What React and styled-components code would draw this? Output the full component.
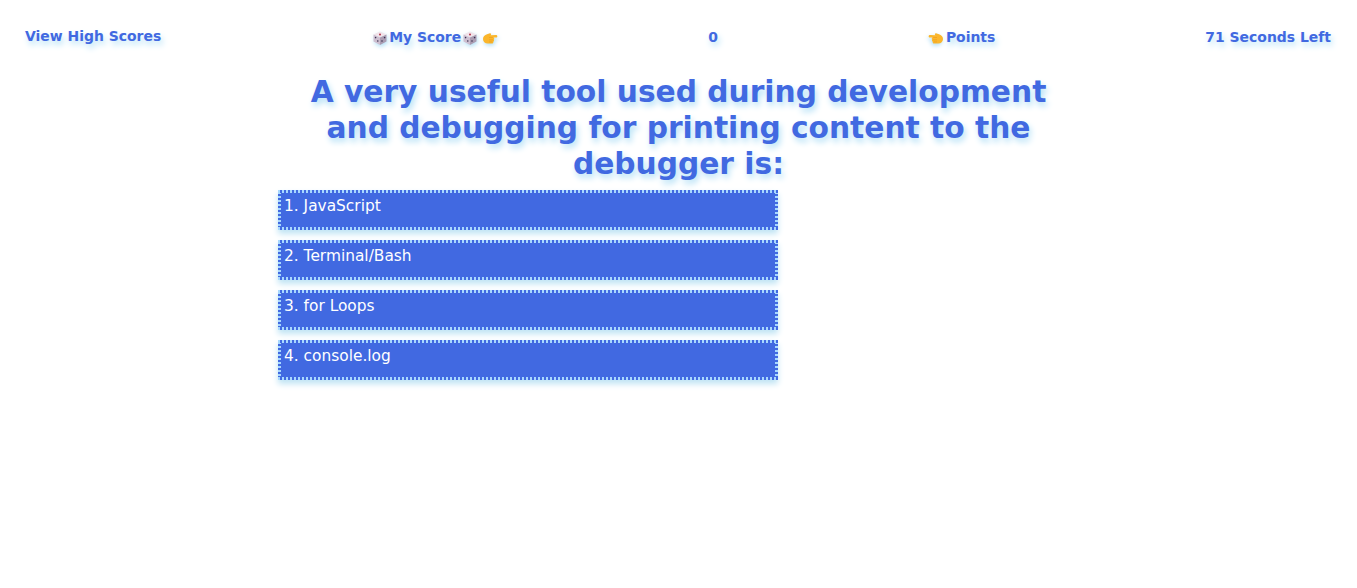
import React from 'react'
import styled, { createGlobalStyle } from 'styled-components'

const answers = ['JavaScript', 'Terminal/Bash', 'for Loops', 'console.log']

function Dice() {
    return (
        <DiceIcon viewBox="0 0 16 16">
            <path d="M8 1.5 14.5 4.5 8 7.5 1.5 4.5Z" fill="#f1e4ea" />
            <path d="M1.5 4.5 8 7.5V15L1.5 11.5Z" fill="#cdbfd0" />
            <path d="M14.5 4.5 8 7.5V15L14.5 11.5Z" fill="#aa9db2" />
            <circle cx="8" cy="4.5" r="1" fill="#b5304a" />
            <circle cx="3.6" cy="7.6" r=".8" fill="#3a3050" />
            <circle cx="5.8" cy="11" r=".8" fill="#3a3050" />
            <circle cx="10" cy="11" r=".8" fill="#3a3050" />
            <circle cx="12.6" cy="7.6" r=".8" fill="#3a3050" />
        </DiceIcon>
    )
}

function Pointer({ left }) {
    return (
        <HandIcon viewBox="0 0 16 16" $left={left}>
            <path d="M1 9C1 6.500 2.800 5 5 4.300L8 3.200c1.200 0 1.500 1.400.6 2l5.400-.2c1.800 0 1.800 2.600 0 2.600H11.500c.9.600.9 1.700.3 2.200.5.700.2 1.600-.5 1.900.2.900-.4 1.700-1.300 1.900H6C3 13.700 1 11.700 1 9Z" fill="#fbb62c" />
            <path d="M7 7.500h3.800M7 9.800h4M7 11.900h3.200" stroke="#e8951a" strokeWidth=".5" fill="none" />
        </HandIcon>
    )
}

function App() {
    return (
        <Page>
            <GlobalStyle />
            <TopBar>
                <HighScores>View High Scores</HighScores>
                <TopItem><Dice />My Score<Dice /><Gap /><Pointer /></TopItem>
                <TopItem>0</TopItem>
                <TopItem><Pointer left />Points</TopItem>
                <TopItem>71 Seconds Left</TopItem>
            </TopBar>
            <Question>A very useful tool used during development and debugging for printing content to the debugger is:</Question>
            <AnswerList>
                {answers.map((answer, i) => (
                    <Answer key={answer}>{i + 1}. {answer}</Answer>
                ))}
            </AnswerList>
        </Page>
    )
}

export default App

const GlobalStyle = createGlobalStyle`
html, body {
    margin:0;
    padding:0;
    background:#fff;
}
`
const Page = styled.div`
font-family:"DejaVu Sans", Verdana, sans-serif;
color:royalblue;
min-height:588px;
`
const TopBar = styled.header`
display:flex;
justify-content:space-between;
align-items:center;
padding:25px 26px 0 25px;
height:22px;
font-size:13.95px;
font-weight:700;
text-shadow:2px 4px 6px #b4e0f6;
`
const TopItem = styled.div`
display:flex;
align-items:center;
margin-top:2px;
`
const HighScores = styled.div``
const Gap = styled.span`
width:3px;
`
const DiceIcon = styled.svg`
width:16px;
height:16px;
margin:2px 1px 0;
filter:drop-shadow(1px 2px 2px #b4e0f6);
`
const HandIcon = styled.svg`
width:16px;
height:16px;
margin-top:1px;
margin-right:${props => props.$left ? '2px' : '0'};
filter:drop-shadow(1px 2px 2px #b4e0f6);
transform:${props => props.$left ? 'scaleX(-1)' : 'none'};
`
const Question = styled.h1`
width:750px;
margin:27px auto 0;
font-size:29.7px;
line-height:36px;
font-weight:700;
text-align:center;
text-shadow:2px 4px 6px #b4e0f6;
`
const AnswerList = styled.div`
display:flex;
flex-direction:column;
gap:10px;
margin:8px 0 0 278px;
width:500px;
`
const Answer = styled.div`
height:40px;
padding:4px 3px;
box-sizing:border-box;
border:3px solid transparent;
background:
    repeating-linear-gradient(90deg, #a8d8ff 0 2px, royalblue 2px 4px) top / 100% 3px no-repeat border-box,
    repeating-linear-gradient(90deg, #a8d8ff 0 2px, royalblue 2px 4px) bottom / 100% 3px no-repeat border-box,
    repeating-linear-gradient(0deg, #a8d8ff 0 2px, royalblue 2px 4px) left / 3px 100% no-repeat border-box,
    repeating-linear-gradient(0deg, #a8d8ff 0 2px, royalblue 2px 4px) right / 3px 100% no-repeat border-box,
    royalblue;
color:#fff;
font-size:15.4px;
line-height:18px;
box-shadow:0 4px 6px #c0e4f4;
`
